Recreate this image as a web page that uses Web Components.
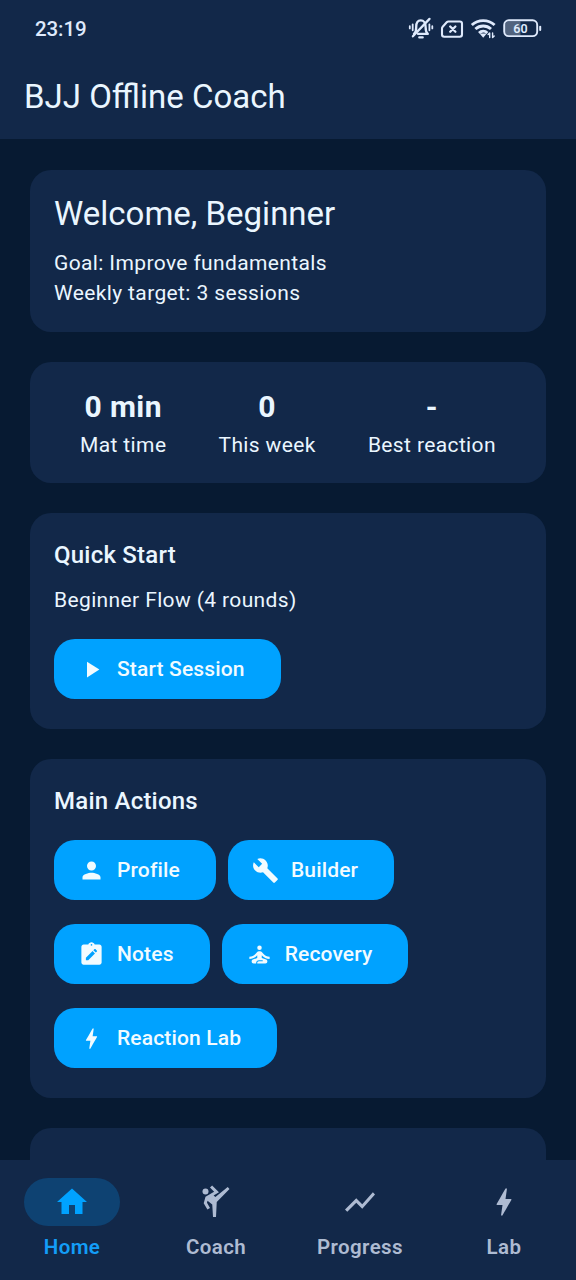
<!DOCTYPE html>
<html lang="en">
<head>
<meta charset="utf-8">
<title>BJJ Offline Coach</title>
<style>
html,body{margin:0;height:100%;background:#071a32}
body{font-family:Roboto,"Liberation Sans",sans-serif;color:#eaf6ff;overflow:hidden;
--surface:#122849;--accent:#00a2ff}
</style>
</head>
<body>
<coach-app></coach-app>
<script>
const ICONS = {
  play:'<path d="M8 5v14l11-7z"/>',
  person:'<path d="M12 12c2.21 0 4-1.79 4-4s-1.79-4-4-4-4 1.79-4 4 1.79 4 4 4zm0 2c-2.67 0-8 1.34-8 4v2h16v-2c0-2.66-5.33-4-8-4z"/>',
  build:'<path d="M22.7 19l-9.1-9.1c.9-2.3.4-5-1.5-6.9-2-2-5-2.4-7.4-1.3L9 6 6 9 1.6 4.7C.4 7.1.9 10.1 2.9 12.1c1.9 1.9 4.6 2.4 6.9 1.5l9.1 9.1c.4.4 1 .4 1.4 0l2.3-2.3c.5-.4.5-1.1.1-1.4z"/>',
  note:'<path d="M19 3h-4.18C14.4 1.84 13.3 1 12 1s-2.4.84-2.82 2H5c-1.1 0-2 .9-2 2v14c0 1.1.9 2 2 2h14c1.1 0 2-.9 2-2V5c0-1.1-.9-2-2-2zm-7-.25c.41 0 .75.34.75.75s-.34.75-.75.75-.75-.34-.75-.75.34-.75.75-.75zM9.1 17H7v-2.14l5.96-5.96 2.12 2.12L9.1 17zm7.75-7.73l-1.06 1.06-2.12-2.12 1.06-1.06c.2-.2.51-.2.71 0l1.41 1.41c.2.2.2.51 0 .71z"/>',
  zen:'<circle cx="12" cy="6" r="2"/><path d="M21 16v-2c-2.24 0-4.16-.96-5.6-2.68l-1.34-1.6c-.38-.46-.94-.72-1.53-.72h-1.05c-.59 0-1.15.26-1.53.72l-1.34 1.6C7.16 13.04 5.24 14 3 14v2c2.77 0 5.19-1.17 7-3.25V15l-3.88 1.55C5.45 16.82 5 17.48 5 18.21 5 19.2 5.8 20 6.79 20H9v-.5c0-1.38 1.12-2.5 2.5-2.5h3c.28 0 .5.22.5.5s-.22.5-.5.5h-3c-.83 0-1.5.67-1.5 1.5v.5h7.21c.99 0 1.79-.8 1.79-1.79 0-.73-.45-1.39-1.12-1.66L14 15v-2.25c1.81 2.08 4.23 3.25 7 3.25z"/>',
  bolt:'<path d="M11 21h-1l1-7H7.5c-.58 0-.57-.32-.38-.66.19-.34.05-.08.07-.12C8.48 10.94 10.42 7.54 13 3h1l-1 7h3.5c.49 0 .56.33.47.51l-.07.15C12.96 17.55 11 21 11 21z"/>',
  home:'<path d="M10 20v-6h4v6h5v-8h3L12 3 2 12h3v8z"/>',
  kick:'<circle cx="5" cy="5" r="2"/><path d="M19.8 2l-8.2 6.7-1.21-1.04 3.6-2.08L9.41 1 8 2.41l2.74 2.74L5 8.46l-1.19 4.29L6.27 17 8 16l-2.01-3.48.37-1.31L9.5 13.6 10 22h2l.5-10L21 3.4z"/>',
  chart:'<path d="M3.5 18.49l6-6.01 4 4L22 6.92l-1.41-1.41-7.09 7.97-4-4L2 16.99z"/>'
};
const define = (name, html, setup) => {
  const t = document.createElement('template');
  t.innerHTML = html;
  customElements.define(name, class extends HTMLElement {
    constructor() {
      super();
      this.attachShadow({mode:'open'}).append(t.content.cloneNode(true));
    }
    connectedCallback() { if (setup) setup(this, this.shadowRoot); }
  });
};

define('md-icon', `<style>:host{display:block;width:27px;height:27px;flex:none}svg{display:block;width:100%;height:100%;fill:currentColor}</style><svg viewBox="0 0 24 24"></svg>`,
  (el, r) => { r.querySelector('svg').innerHTML = ICONS[el.getAttribute('name')]; });

define('status-bar', `<style>
:host{display:flex;height:55px;box-sizing:border-box;padding:2px 34px 0 35px;align-items:center;color:#dfeafc}
time{font-size:20.5px;font-weight:500;letter-spacing:-.1px;flex:1}
svg{display:block;flex:none}
</style>
<time>23:19</time>
<svg width="134" height="26" viewBox="408 16 134 26" fill="none" stroke="currentColor" stroke-width="2.300" stroke-linecap="round" stroke-linejoin="round">
<path d="M414 33.900c2.400-2 2.200-4.200 2.200-7 0-4 1.800-6.500 4.600-6.500s4.800 2.500 4.800 6.500c0 3 0 5 2.200 7H418"/>
<path d="M419.300 37.400h3.400M412.900 36.300L429.500 18.900" />
<path d="M412.700 24.300v6M409.800 26.200v2.200M429.400 24.300v6M432.300 26.200v2.200" stroke-width="1.800"/>
<path d="M448.500 21.500h11.300q2.200 0 2.200 2.200v10.900q0 2.200-2.200 2.200h-15.600q-2.200 0-2.200-2.200v-6.100q0-1 .7-1.700l4-4.500q.7-.8 1.800-.8z" stroke-width="2.100"/>
<path d="M450.200 26.500l5.200 5.200M455.400 26.500l-5.200 5.200" stroke-width="2.300"/>
<g stroke-width="2.900" stroke-linecap="butt"><path d="M471.800 25c6.400-5.900 16.400-5.900 22.800 0M475.400 29c4.400-4.100 11.200-4.100 15.600 0M479 33c2.500-2.300 6-2.300 8.400 0"/></g>
<path d="M479.600 33.600h7.200l-3.600 4.200z" fill="currentColor" stroke="none"/>
<path d="M489.700 37.500v-4.600l-1.600 1.700M492.600 33v4.600l1.600-1.700" stroke-width="1.400"/>
<path d="M509 21.500h11.500v14H509q-4 0-4-4v-6q0-4 4-4z" fill="#52647f" stroke="none"/>
<rect x="504.200" y="20.300" width="33" height="15.800" rx="4.600" stroke-width="1.900"/>
<path d="M540.200 26.700v3.400" stroke-width="2"/>
<text x="520.400" y="32.900" text-anchor="middle" fill="currentColor" stroke="none" font-family="Roboto,sans-serif" font-size="12.500" font-weight="600">60</text>
</svg>`);

define('app-bar', `<style>:host{display:block;background:var(--surface);height:139px;flex:none}
h1{margin:0;height:84px;padding:0 24px;font-size:33px;font-weight:400;line-height:83px}</style>
<status-bar></status-bar><h1><slot></slot></h1>`);

define('ui-card', `<style>:host{display:block;box-sizing:border-box;background:var(--surface);border-radius:21px;padding:24px;flex:none;font-size:21px;line-height:30px;letter-spacing:.375px}
h2{margin:0;font-size:24px;line-height:36px;font-weight:500;letter-spacing:.225px}
:host([large]) h2{font-size:33px;line-height:40px;font-weight:400;letter-spacing:0;margin-bottom:14px}</style>
<h2></h2><slot></slot>`, (el, r) => {
  const h = r.querySelector('h2');
  if (el.hasAttribute('heading')) h.textContent = el.getAttribute('heading'); else h.hidden = true;
});

define('stat-item', `<style>:host{display:flex;flex-direction:column;align-items:center;line-height:30px}
b{font-size:30px;line-height:41px;font-weight:700;letter-spacing:.375px;margin-bottom:3px}</style><b></b><slot></slot>`,
  (el, r) => { r.querySelector('b').textContent = el.getAttribute('value'); });

define('action-button', `<style>:host{display:block}
button{display:flex;align-items:center;gap:12px;height:60px;border:0;border-radius:21px;background:var(--accent);color:#f2fbff;padding:0 36px 0 24px;font:500 21px/30px Roboto,sans-serif;letter-spacing:.15px;white-space:nowrap}</style>
<button><span class="icon"></span><span><slot></slot></span></button>`,
  (el, r) => { r.querySelector('.icon').innerHTML = `<md-icon name="${el.getAttribute('icon')}"></md-icon>`; });

define('nav-item', `<style>:host{display:flex;flex-direction:column;align-items:center;flex:1;padding-top:18px;color:#aebbd2;font-size:20.500px;font-weight:600;letter-spacing:.4px;line-height:30px}
div{width:96px;height:48px;border-radius:24px;display:flex;align-items:center;justify-content:center;margin-bottom:6px}
md-icon{width:36px;height:36px}
:host([active]){color:#139df7}:host([active]) div{background:#0e4272;color:var(--accent)}</style>
<div></div><slot></slot>`,
  (el, r) => { r.querySelector('div').innerHTML = `<md-icon name="${el.getAttribute('icon')}"></md-icon>`; });

define('nav-bar', `<style>:host{display:flex;height:120px;flex:none;background:var(--surface)}</style><slot></slot>`);

define('coach-app', `<style>
:host{display:flex;flex-direction:column;width:576px;height:1280px}
main{flex:1;min-height:0;overflow:hidden;display:flex;flex-direction:column;gap:30px;padding:30.500px 30px 0}
.stats{display:flex;justify-content:space-around;height:73.500px}
.flow{margin-top:12px}.start{margin:24px 0 6px;display:flex}
.actions{display:flex;flex-wrap:wrap;gap:24px 12px;margin:21px 0 6px}
.next{height:200px}
</style>
<app-bar>BJJ Offline Coach</app-bar>
<main>
<ui-card large heading="Welcome, Beginner"><div>Goal: Improve fundamentals</div><div>Weekly target: 3 sessions</div></ui-card>
<ui-card><div class="stats"><stat-item value="0 min">Mat time</stat-item><stat-item value="0">This week</stat-item><stat-item value="-">Best reaction</stat-item></div></ui-card>
<ui-card heading="Quick Start"><div class="flow">Beginner Flow (4 rounds)</div><div class="start"><action-button icon="play">Start Session</action-button></div></ui-card>
<ui-card heading="Main Actions"><div class="actions"><action-button icon="person">Profile</action-button><action-button icon="build">Builder</action-button><action-button icon="note">Notes</action-button><action-button icon="zen">Recovery</action-button><action-button icon="bolt">Reaction Lab</action-button></div></ui-card>
<ui-card class="next"></ui-card>
</main>
<nav-bar><nav-item active icon="home">Home</nav-item><nav-item icon="kick">Coach</nav-item><nav-item icon="chart">Progress</nav-item><nav-item icon="bolt">Lab</nav-item></nav-bar>`);
</script>
</body>
</html>
